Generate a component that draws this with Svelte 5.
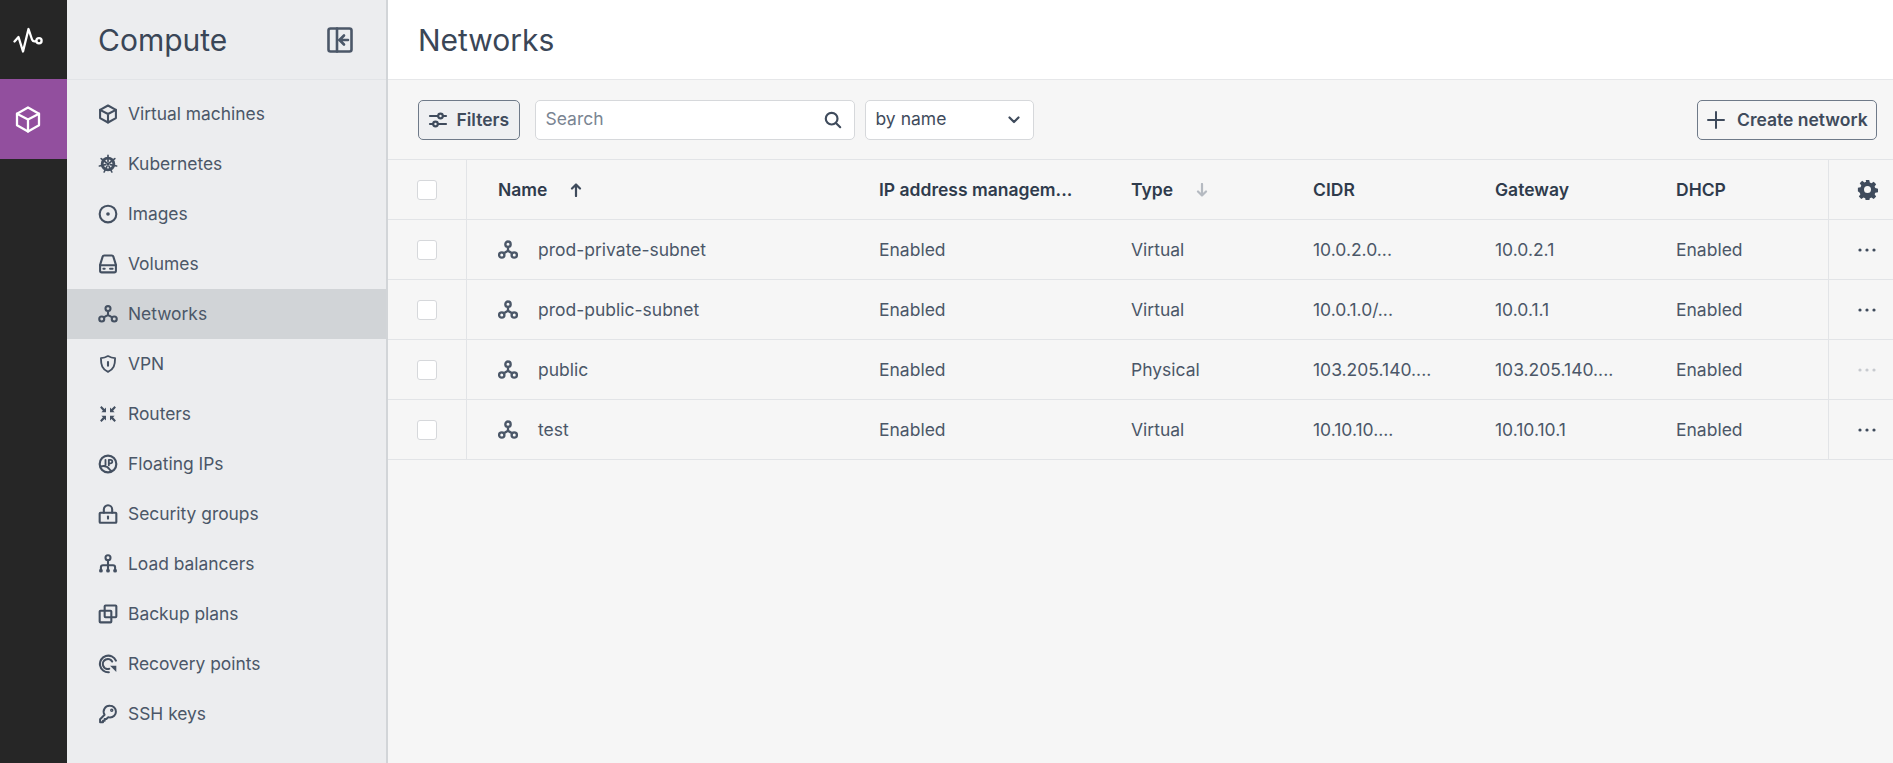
<script lang="ts">
	const navItems = [
		{ label: 'Virtual machines', icon: 'box' },
		{ label: 'Kubernetes', icon: 'helm' },
		{ label: 'Images', icon: 'disc' },
		{ label: 'Volumes', icon: 'drive' },
		{ label: 'Networks', icon: 'network', active: true },
		{ label: 'VPN', icon: 'shield' },
		{ label: 'Routers', icon: 'router' },
		{ label: 'Floating IPs', icon: 'ip' },
		{ label: 'Security groups', icon: 'lock' },
		{ label: 'Load balancers', icon: 'balancer' },
		{ label: 'Backup plans', icon: 'copy' },
		{ label: 'Recovery points', icon: 'recovery' },
		{ label: 'SSH keys', icon: 'key' }
	];

	const rows = [
		{ name: 'prod-private-subnet', ipam: 'Enabled', type: 'Virtual', cidr: '10.0.2.0...', gateway: '10.0.2.1', dhcp: 'Enabled' },
		{ name: 'prod-public-subnet', ipam: 'Enabled', type: 'Virtual', cidr: '10.0.1.0/...', gateway: '10.0.1.1', dhcp: 'Enabled' },
		{ name: 'public', ipam: 'Enabled', type: 'Physical', cidr: '103.205.140....', gateway: '103.205.140....', dhcp: 'Enabled', locked: true },
		{ name: 'test', ipam: 'Enabled', type: 'Virtual', cidr: '10.10.10....', gateway: '10.10.10.1', dhcp: 'Enabled' }
	];
</script>

{#snippet icon(name)}
	<svg class="icon" viewBox="0 0 24 24" fill="none" stroke="currentColor" stroke-width="2.5" stroke-linecap="round" stroke-linejoin="round">
		{#if name === 'box'}
			<path d="M12 1.800l9.500 5.300v9.800L12 22.200l-9.500-5.300V7.100z" />
			<path d="M12 12l9.500-4.900M12 12v10.200M12 12L2.500 7.100" />
		{:else if name === 'helm'}
			<circle cx="12" cy="12" r="7" stroke-width="3.400" />
			<circle cx="12" cy="12" r="2" fill="currentColor" stroke="none" />
			<path d="M12 1.500V9M20.200 5.500L14 10.500M22.300 14.400L15 12.800M16.600 21.600L13.200 14.700M7.400 21.600L10.800 14.700M1.700 14.400L9 12.800M3.800 5.500L10 10.500" stroke-width="2" />
		{:else if name === 'disc'}
			<circle cx="12" cy="12" r="10" />
			<circle cx="12" cy="12" r="2.200" fill="currentColor" stroke="none" />
		{:else if name === 'drive'}
			<path d="M7.500 1.800h9a2 2 0 0 1 2 1.600l3 9.600v7a2 2 0 0 1-2 2h-15a2 2 0 0 1-2-2v-7l3-9.600a2 2 0 0 1 2-1.600z" />
			<path d="M2.500 13.500h19M6.500 17.700h1.500M14.500 17.700h3" />
		{:else if name === 'network'}
			<circle cx="12" cy="5.500" r="3" />
			<circle cx="4.500" cy="18" r="3" />
			<circle cx="19.500" cy="18" r="3" />
			<path d="M12 8.500V13l-5 3M12 13l5 3" />
		{:else if name === 'shield'}
			<path d="M12 2.500c3 1.800 5.500 2.400 8.500 2.400 0 8.500-1.500 13.600-8.500 16.600C5 18.500 3.500 13.400 3.500 4.900c3 0 5.500-.6 8.500-2.400z" stroke-width="2.200" />
			<path d="M12 9.500v.01M12 9.500v4.500" />
		{:else if name === 'router'}
			<g fill="currentColor" stroke="none">
				<path d="M2.500 4.200l1.700-1.700 3.600 3.600 1.800-1.800v5.600H4l1.900-1.900z" />
				<path d="M21.500 4.200l-1.700-1.700-3.600 3.600-1.800-1.800v5.600H20l-1.900-1.900z" />
				<path d="M2.500 19.800l1.700 1.700 3.600-3.600 1.800 1.800v-5.600H4l1.900 1.900z" />
				<path d="M21.500 19.800l-1.700 1.700-3.600-3.600-1.800 1.800v-5.600H20l-1.900 1.900z" />
			</g>
		{:else if name === 'ip'}
			<circle cx="12" cy="12" r="10" stroke-width="2.600" />
			<path d="M9 7v6.500M13 13.500V7h2a2 2 0 0 1 0 4.300h-2M3 15c5-1.500 9 .5 11 3.500 1 1.500 2 2 3 1.500" stroke-width="2.200" />
		{:else if name === 'lock'}
			<rect x="2" y="10.500" width="20" height="12" rx="1" />
			<path d="M7 10.500V6.500a5 5 0 0 1 10 0v4" />
			<path d="M12 15v2.500" />
		{:else if name === 'balancer'}
			<circle cx="12" cy="4.500" r="3" />
			<path d="M12 7.500V19M3.500 19v-3a2.500 2.500 0 0 1 2.500-2.500h12a2.500 2.500 0 0 1 2.500 2.500v3" />
			<circle cx="3.500" cy="20" r="2.300" fill="currentColor" stroke="none" />
			<circle cx="12" cy="20" r="2.300" fill="currentColor" stroke="none" />
			<circle cx="20.500" cy="20" r="2.300" fill="currentColor" stroke="none" />
		{:else if name === 'copy'}
			<rect x="8" y="1.800" width="14" height="14" rx="1" />
			<rect x="2" y="8" width="14" height="14" rx="1" />
		{:else if name === 'recovery'}
			<path d="M21.500 8A10 10 0 1 0 13 21.900" />
			<path d="M17 9A6 6 0 1 0 13.500 17.800" />
			<path d="M22 21.500v-7.500h-7.500z" fill="currentColor" stroke="none" />
		{:else if name === 'key'}
			<path d="M14.500 2.200a7 7 0 0 1 0 14c-.8 0-1.500-.1-2.200-.4L10 18H8v2H6v2H2.500v-3.700l5.400-5.400A7 7 0 0 1 14.500 2.200z" stroke-width="2.400" />
			<circle cx="16.500" cy="7.500" r=".8" />
		{/if}
	</svg>
{/snippet}

{#snippet networkIcon()}
	<svg class="row-icon" viewBox="0 0 24 24" fill="none" stroke="currentColor" stroke-width="2.800" stroke-linecap="round" stroke-linejoin="round">
		<circle cx="12" cy="5" r="3.200" />
		<circle cx="4.500" cy="18" r="3.200" />
		<circle cx="19.500" cy="18" r="3.200" />
		<path d="M12 8.200V13l-5 3M12 13l5 3" />
	</svg>
{/snippet}

<div class="app">
	<nav class="rail">
		<div class="rail-logo">
			<svg viewBox="0 0 30 26" fill="none" stroke="currentColor" stroke-width="2.300" stroke-linecap="round" stroke-linejoin="round">
				<path d="M1.500 14.500L5.500 10l4.500 14.500L15.500 2 19 12.500c.8 1.800 2 2.300 4 1.700" />
				<circle cx="26" cy="13.700" r="2.600" />
			</svg>
		</div>
		<div class="rail-item">
			<svg viewBox="0 0 26 27" fill="none" stroke="currentColor" stroke-width="2.300" stroke-linecap="round" stroke-linejoin="round">
				<path d="M13 1.500l11 6.200v11.600l-11 6.200-11-6.200V7.700z" />
				<path d="M13 13.500l11-5.800M13 13.500v12M13 13.500L2 7.700" />
			</svg>
		</div>
	</nav>

	<aside class="sidebar">
		<header class="side-head">
			<h2>Compute</h2>
			<svg class="collapse" viewBox="0 0 26 26" fill="none" stroke="currentColor" stroke-width="2.600" stroke-linecap="round" stroke-linejoin="round">
				<rect x="1.500" y="1.500" width="23" height="23" rx="2" />
				<path d="M10 1.500v23M21 13h-8M17 8.500L12.500 13l4.500 4.500" />
			</svg>
		</header>
		<ul class="nav">
			{#each navItems as item}
				<li class:active={item.active}>
					{@render icon(item.icon)}
					<span>{item.label}</span>
				</li>
			{/each}
		</ul>
	</aside>

	<main class="main">
		<header class="page-head">
			<h1>Networks</h1>
		</header>
		<div class="toolbar">
			<button class="btn filters">
				<svg viewBox="0 0 20 20" fill="none" stroke="currentColor" stroke-width="2.200" stroke-linecap="round">
					<path d="M2 6h8M15 6h3M2 14h3M10 14h8" />
					<circle cx="12.500" cy="6" r="2.300" />
					<circle cx="7.500" cy="14" r="2.300" />
				</svg>
				Filters
			</button>
			<div class="search">
				<span>Search</span>
				<svg viewBox="0 0 20 20" fill="none" stroke="currentColor" stroke-width="2.400" stroke-linecap="round">
					<circle cx="8.500" cy="8.500" r="6.500" />
					<path d="M13.500 13.500L18 18" />
				</svg>
			</div>
			<div class="sort">
				<span>by name</span>
				<svg viewBox="0 0 12 8" fill="none" stroke="currentColor" stroke-width="2.200" stroke-linecap="round" stroke-linejoin="round">
					<path d="M1.500 1.500L6 6l4.500-4.500" />
				</svg>
			</div>
			<button class="btn create">
				<svg viewBox="0 0 18 18" fill="none" stroke="currentColor" stroke-width="2" stroke-linecap="round">
					<path d="M9 1v16M1 9h16" />
				</svg>
				Create network
			</button>
		</div>

		<div class="table">
			<div class="row head">
				<div class="cell check"><span class="box"></span></div>
				<div class="cell name-col">
					Name
					<svg class="arrow" viewBox="0 0 12 14" fill="none" stroke="currentColor" stroke-width="2.200" stroke-linecap="round" stroke-linejoin="round">
						<path d="M6 13V1.500M2 5.500l4-4 4 4" />
					</svg>
				</div>
				<div class="cell">IP address managem...</div>
				<div class="cell">
					Type
					<svg class="arrow faded" viewBox="0 0 12 14" fill="none" stroke="currentColor" stroke-width="2.200" stroke-linecap="round" stroke-linejoin="round">
						<path d="M6 1v11.500M2 8.500l4 4 4-4" />
					</svg>
				</div>
				<div class="cell">CIDR</div>
				<div class="cell">Gateway</div>
				<div class="cell">DHCP</div>
				<div class="cell last">
					<svg class="gear" viewBox="0 0 24 24" fill="currentColor">
						<path fill-rule="evenodd" d="M10 1h4l.6 3.100 1.900.8 2.600-1.800 2.800 2.800-1.800 2.600.8 1.900 3.100.6v4l-3.100.6-.8 1.900 1.800 2.600-2.800 2.800-2.600-1.800-1.900.8-.6 3.100h-4l-.6-3.100-1.900-.8-2.600 1.800-2.800-2.800 1.800-2.600-.8-1.900L1 14v-4l3.100-.6.8-1.900-1.800-2.600 2.800-2.800 2.600 1.800 1.900-.8zM12 8a4 4 0 1 0 0 8 4 4 0 0 0 0-8z" />
					</svg>
				</div>
			</div>
			{#each rows as row}
				<div class="row">
					<div class="cell check"><span class="box"></span></div>
					<div class="cell name-col">
						{@render networkIcon()}
						<span class="net-name">{row.name}</span>
					</div>
					<div class="cell">{row.ipam}</div>
					<div class="cell">{row.type}</div>
					<div class="cell">{row.cidr}</div>
					<div class="cell">{row.gateway}</div>
					<div class="cell">{row.dhcp}</div>
					<div class="cell last">
						<svg class="dots" class:locked={row.locked} viewBox="0 0 20 4" fill="currentColor">
							<circle cx="3" cy="2" r="1.600" />
							<circle cx="10" cy="2" r="1.600" />
							<circle cx="17" cy="2" r="1.600" />
						</svg>
					</div>
				</div>
			{/each}
		</div>
	</main>
</div>

<style>
	:global(body) {
		margin: 0;
		font-family: Inter, 'Liberation Sans', sans-serif;
		color: #2f3b4c;
	}
	.app {
		display: flex;
		height: 763px;
		overflow: hidden;
	}
	.rail {
		width: 67px;
		flex-shrink: 0;
		background: #262626;
		color: #fff;
	}
	.rail-logo,
	.rail-item {
		display: flex;
		align-items: center;
	}
	.rail-logo {
		height: 79px;
		padding-left: 13px;
	}
	.rail-logo svg {
		width: 30px;
		height: 26px;
	}
	.rail-item {
		height: 80px;
		padding-left: 15px;
		background: #924f9e;
	}
	.rail-item svg {
		width: 26px;
		height: 27px;
	}
	.sidebar {
		width: 319px;
		flex-shrink: 0;
		background: #ecedef;
		border-right: 2px solid #d2d5d8;
	}
	.side-head {
		height: 79px;
		border-bottom: 1px solid #e2e4e7;
		display: flex;
		align-items: center;
		justify-content: space-between;
		padding: 0 33px 0 31px;
	}
	.side-head h2,
	.page-head h1 {
		margin: 0;
		font-size: 30px;
		font-weight: 400;
		color: #3a4657;
	}
	.collapse {
		width: 26px;
		height: 26px;
		color: #4b5768;
	}
	.nav {
		list-style: none;
		margin: 0;
		padding: 9px 0 0;
	}
	.nav li {
		height: 50px;
		display: flex;
		align-items: center;
		gap: 10px;
		padding-left: 31px;
		font-size: 17.4px;
		color: #4b5768;
	}
	.nav li span {
		margin-bottom: 2px;
	}
	.nav li.active {
		background: #d1d4d7;
	}
	.icon {
		width: 20px;
		height: 20px;
		flex-shrink: 0;
		color: #445061;
	}
	.main {
		flex: 1;
		min-width: 0;
		display: flex;
		flex-direction: column;
		background: #f6f6f6;
	}
	.page-head {
		height: 79px;
		background: #fff;
		border-bottom: 1px solid #e6e7e9;
		display: flex;
		align-items: center;
		padding: 0 30px;
	}
	.toolbar {
		height: 79px;
		display: flex;
		align-items: center;
		padding: 0 16px 0 29.500px;
		gap: 10px;
	}
	.btn {
		height: 40px;
		display: flex;
		align-items: center;
		box-sizing: border-box;
		border: 1.500px solid #6f7a89;
		border-radius: 5px;
		background: #f6f6f6;
		font: 600 17.500px Inter, sans-serif;
		color: #3f4b5c;
		padding: 0;
	}
	.filters {
		width: 102px;
		gap: 9px;
		padding-left: 9px;
		margin-right: 5px;
		background: #eff0f2;
	}
	.filters svg {
		width: 20px;
		height: 20px;
	}
	.search,
	.sort {
		height: 40px;
		box-sizing: border-box;
		background: #fff;
		border: 1.500px solid #d6d8db;
		border-radius: 5px;
		display: flex;
		align-items: center;
		justify-content: space-between;
		font-size: 17.500px;
	}
	.search span,
	.sort span {
		margin-bottom: 2px;
	}
	.search {
		width: 320px;
		padding: 0 12px 0 10px;
		color: #7a8492;
	}
	.search svg {
		width: 18px;
		height: 18px;
		color: #3f4b5c;
	}
	.sort {
		width: 169px;
		padding: 0 13px 0 10px;
		color: #3f4b5c;
	}
	.sort svg {
		width: 12px;
		height: 8px;
	}
	.create {
		width: 180px;
		margin-left: auto;
		gap: 12px;
		padding-left: 9px;
		white-space: nowrap;
	}
	.create svg {
		width: 18px;
		height: 18px;
	}
	.table {
		border-top: 1px solid #e2e4e7;
	}
	.row {
		display: grid;
		grid-template-columns: 79px 380px 252px 182px 182px 181px 184px 65px;
		height: 60px;
		box-sizing: border-box;
		border-bottom: 1px solid #e2e4e7;
		font-size: 17.500px;
		color: #4b5768;
	}
	.row.head {
		font-weight: 600;
		color: #2f3b4c;
	}
	.cell {
		display: flex;
		align-items: center;
		padding-left: 32px;
		white-space: nowrap;
		min-width: 0;
	}
	.check {
		padding-left: 29px;
		border-right: 1px solid #e2e4e7;
	}
	.name-col {
		padding-left: 31px;
	}
	.box {
		width: 20px;
		height: 20px;
		box-sizing: border-box;
		background: #fff;
		border: 1.500px solid #d6d8db;
		border-radius: 3px;
	}
	.arrow {
		width: 12px;
		height: 14px;
		margin-left: 23px;
		color: #3f4b5c;
	}
	.arrow.faded {
		color: #b5bac1;
	}
	.last {
		padding: 0 0 0 28px;
		border-left: 1px solid #e2e4e7;
	}
	.gear {
		width: 21px;
		height: 21px;
		color: #3f4b5c;
	}
	.dots {
		width: 20px;
		height: 4px;
		color: #3f4b5c;
	}
	.dots.locked {
		color: #c7cacf;
	}
	.row-icon {
		width: 20px;
		height: 20px;
		flex-shrink: 0;
		color: #4b5768;
	}
	.net-name {
		margin-left: 20px;
	}
</style>
